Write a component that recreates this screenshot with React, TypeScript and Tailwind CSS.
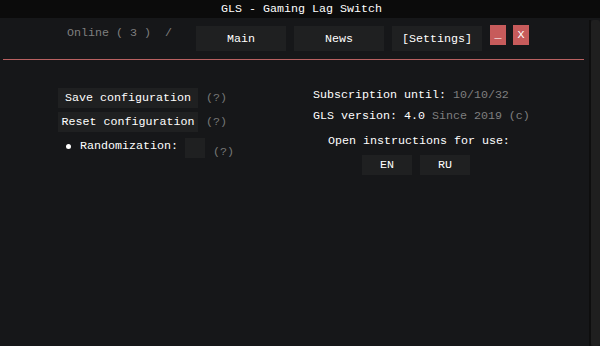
import React from "react";

const F = "font-['Liberation_Mono','DejaVu_Sans_Mono',monospace] text-[11.67px] leading-[14px]";

function Btn({ w, h, children, className = "" }: { w: string; h: string; children: React.ReactNode; className?: string }) {
  return (
    <div className={`${w} ${h} bg-[#1f2021] text-white flex items-center justify-center whitespace-pre ${className}`}>{children}</div>
  );
}

export default function App() {
  return (
    <div className={`w-[600px] h-[346px] bg-[#161719] flex flex-col overflow-hidden ${F}`}>
      <div className="h-[18px] bg-[#0b0b0b] text-white flex items-center justify-center whitespace-pre pl-[3px]">
        GLS - Gaming Lag Switch
      </div>
      <div className="flex flex-1">
        <div className="flex-1 flex flex-col">
          {/* header row */}
          <div className="flex items-start pl-[67px] pt-[8px]">
            <span className="text-[#7f7f7f] whitespace-pre">Online ( 3 )  /</span>
            <div className="flex gap-2 ml-[24px]">
              <Btn w="w-[90px]" h="h-[25px]">Main</Btn>
              <Btn w="w-[90px]" h="h-[25px]">News</Btn>
              <Btn w="w-[90px]" h="h-[25px]">[Settings]</Btn>
            </div>
            <div className="flex gap-[7px] ml-2 -mt-[1px]">
              <div className="w-[16px] h-[20px] bg-[#c75b5b] text-white flex items-center justify-center">_</div>
              <div className="w-[16px] h-[20px] bg-[#c75b5b] text-white flex items-center justify-center">X</div>
            </div>
          </div>
          <div className="ml-[3px] w-[581px] h-[1px] bg-[#b96161] mt-[8px]" />
          {/* content */}
          <div className="flex pl-[58px]">
            <div className="w-[255px] flex flex-col mt-[28px]">
              <div className="flex items-center">
                <Btn w="w-[140px]" h="h-[20px]">Save configuration</Btn>
                <span className="ml-[8px] text-[#777]">(?)</span>
              </div>
              <div className="flex items-center mt-[4px]">
                <Btn w="w-[140px]" h="h-[20px]">Reset configuration</Btn>
                <span className="ml-[8px] text-[#777]">(?)</span>
              </div>
              <div className="flex items-start mt-[7px]">
                <div className="w-[5px] h-[5px] rounded-full bg-white mt-[5px] ml-[8px]" />
                <span className="ml-[9px] text-white whitespace-pre">Randomization:</span>
                <div className="w-[20px] h-[20px] bg-[#1f2021] ml-[7px] -mt-[1px]" />
                <span className="ml-[8px] text-[#777] mt-[6px]">(?)</span>
              </div>
            </div>
            <div className="flex flex-col mt-[25px]">
              <div className="h-[20px] flex items-center whitespace-pre text-white">
                Subscription until: <span className="text-[#7f7f7f]">10/10/32</span>
              </div>
              <div className="h-[20px] flex items-center whitespace-pre text-white mt-[1px]">
                GLS version: 4.0 <span className="text-[#7f7f7f]">Since 2019 (c)</span>
              </div>
              <div className="h-[20px] flex items-center whitespace-pre text-white mt-[5px] ml-[15px]">
                Open instructions for use:
              </div>
              <div className="flex gap-2 mt-[4px] ml-[49px]">
                <Btn w="w-[50px]" h="h-[20px]">EN</Btn>
                <Btn w="w-[50px]" h="h-[20px]">RU</Btn>
              </div>
            </div>
          </div>
        </div>
        <div className="w-[11px] flex pt-[2px]">
          <div className="w-[2px] bg-[#0e0e0e]" />
          <div className="flex-1 bg-[#1f1f1f] rounded-t-[3px] rounded-b-[3px]" />
        </div>
      </div>
    </div>
  );
}
